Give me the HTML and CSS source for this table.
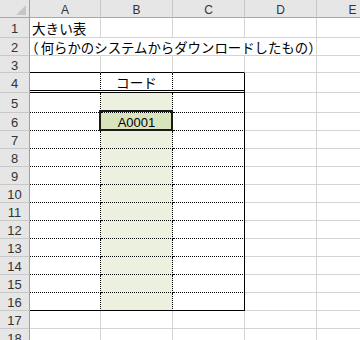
FILE: index.html
```html
<!DOCTYPE html>
<html lang="ja">
<head>
<meta charset="utf-8">
<link rel="stylesheet" href="styles.css">
</head>
<body>
<div class="sheet">
  <div class="h corner"><svg class="tri" width="10" height="10" viewBox="0 0 10 10"><polygon points="10,0 10,10 0,10" fill="#c6c6c6"/></svg></div>
  <div class="h">A</div><div class="h">B</div><div class="h">C</div><div class="h">D</div><div class="h">E</div>

  <div class="rh">1</div><div class="c txt">大きい表</div><div class="c"></div><div class="c"></div><div class="c"></div><div class="c"></div>
  <div class="rh">2</div><div class="c txt span4"><span class="paren lp">（</span>何らかのシステムからダウンロードしたもの<span class="paren">）</span></div><div class="c"></div>
  <div class="rh">3</div><div class="c t3"></div><div class="c t3"></div><div class="c t3"></div><div class="c"></div><div class="c"></div>
  <div class="rh">4</div><div class="c t4 dv"></div><div class="c t4 dv ctr">コード</div><div class="c t4 sv"></div><div class="c"></div><div class="c"></div>
  <div class="rh">5</div><div class="c dh dv"></div><div class="c dh dv g"></div><div class="c dh sv"></div><div class="c"></div><div class="c"></div>
  <div class="rh">6</div><div class="c dh dv"></div><div class="c dh dv sel ctr lat">A0001<div class="selbox"></div></div><div class="c dh sv"></div><div class="c"></div><div class="c"></div>
  <div class="rh">7</div><div class="c dh dv"></div><div class="c dh dv g"></div><div class="c dh sv"></div><div class="c"></div><div class="c"></div>
  <div class="rh">8</div><div class="c dh dv"></div><div class="c dh dv g"></div><div class="c dh sv"></div><div class="c"></div><div class="c"></div>
  <div class="rh">9</div><div class="c dh dv"></div><div class="c dh dv g"></div><div class="c dh sv"></div><div class="c"></div><div class="c"></div>
  <div class="rh">10</div><div class="c dh dv"></div><div class="c dh dv g"></div><div class="c dh sv"></div><div class="c"></div><div class="c"></div>
  <div class="rh">11</div><div class="c dh dv"></div><div class="c dh dv g"></div><div class="c dh sv"></div><div class="c"></div><div class="c"></div>
  <div class="rh">12</div><div class="c dh dv"></div><div class="c dh dv g"></div><div class="c dh sv"></div><div class="c"></div><div class="c"></div>
  <div class="rh">13</div><div class="c dh dv"></div><div class="c dh dv g"></div><div class="c dh sv"></div><div class="c"></div><div class="c"></div>
  <div class="rh">14</div><div class="c dh dv"></div><div class="c dh dv g"></div><div class="c dh sv"></div><div class="c"></div><div class="c"></div>
  <div class="rh">15</div><div class="c dh dv"></div><div class="c dh dv g"></div><div class="c dh sv"></div><div class="c"></div><div class="c"></div>
  <div class="rh">16</div><div class="c sh dv"></div><div class="c sh dv g"></div><div class="c sh sv"></div><div class="c"></div><div class="c"></div>
  <div class="rh">17</div><div class="c"></div><div class="c"></div><div class="c"></div><div class="c"></div><div class="c"></div>
  <div class="rh">18</div><div class="c"></div><div class="c"></div><div class="c"></div><div class="c"></div><div class="c"></div>
</div>
</body>
</html>
```

FILE: styles.css
```css
html, body {
  margin: 0;
  padding: 0;
  background: #ffffff;
  overflow: hidden;
}
.sheet {
  display: grid;
  grid-template-columns: 30px 71px 72px 72px 72px 72px;
  grid-template-rows: 18px 20px 18px 17px 20px 20px repeat(13, 18px);
  width: 389px;
  font-family: "Noto Sans CJK JP", sans-serif;
  font-size: 13.6px;
  color: #000;
}
.sheet > div {
  box-sizing: border-box;
  min-width: 0;
}
.h {
  background: #e6e6e6;
  border-right: 1px solid #c8c8c8;
  border-bottom: 1px solid #a8a8a8;
  font-family: "Liberation Sans", Arial, sans-serif;
  font-size: 12px;
  color: #333;
  display: flex;
  align-items: center;
  justify-content: center;
  padding-top: 3px;
}
.corner {
  border-right: 1px solid #a0a0a0;
  align-items: flex-end;
  justify-content: flex-end;
  padding: 0 3px 2px 0;
}
.tri {
  display: block;
}
.rh {
  background: #e6e6e6;
  border-right: 1px solid #a0a0a0;
  border-bottom: 1px solid #c8c8c8;
  font-family: "Liberation Sans", Arial, sans-serif;
  font-size: 13px;
  color: #333;
  display: flex;
  align-items: center;
  justify-content: center;
  padding-top: 2px;
}
.c {
  border-right: 1px solid #d4d4d4;
  border-bottom: 1px solid #d4d4d4;
  display: flex;
  align-items: center;
  white-space: nowrap;
}
.txt {
  padding-left: 2px;
  padding-top: 1px;
}
.span4 {
  grid-column: span 4;
  font-size: 13.4px;
}
.paren {
  font-feature-settings: "halt";
}
.lp {
  margin-right: 2px;
}
.ctr {
  justify-content: center;
}
.lat {
  font-family: "Liberation Sans", Arial, sans-serif;
  font-size: 13px;
}
.t3 { border-bottom: 1px solid #000; }
.t4 { border-bottom: 3px double #000; }
.dv { border-right: 1px dotted #000; }
.sv { border-right: 1px solid #000; }
.dh { border-bottom: 1px dotted #000; }
.sh { border-bottom: 1px solid #000; }
.g { background: #ebf1de; }
.sel {
  background: #d8e4bc;
  position: relative;
  padding-top: 1px;
}
.selbox {
  position: absolute;
  left: -2px;
  top: -3px;
  width: 74px;
  height: 21px;
  border: 2px solid #1a1a1a;
  box-sizing: border-box;
  pointer-events: none;
}
```
